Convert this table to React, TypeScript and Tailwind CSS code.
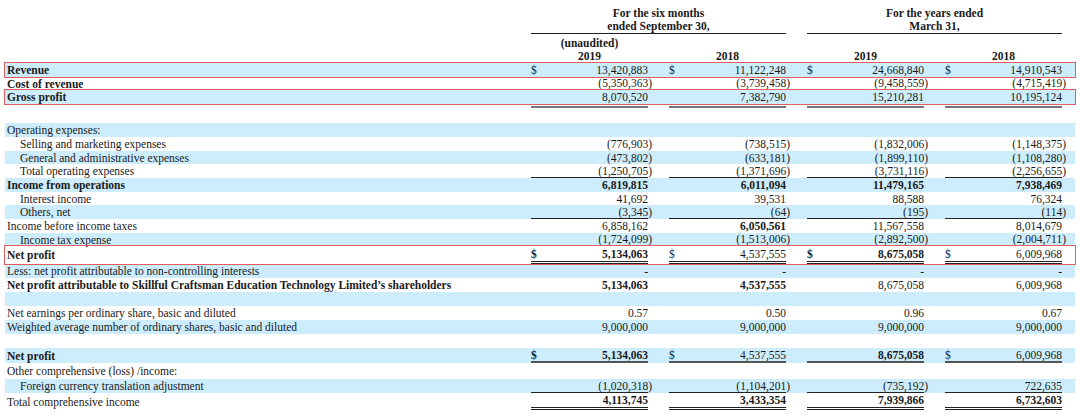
import clsx from "clsx";

type Cell = { v: string; d?: boolean; b?: boolean; bd?: boolean };
type Row = {
	label?: string;
	h: string;
	lb?: boolean;
	ind?: boolean;
	bg?: boolean;
	box?: boolean;
	line?: string;
	cells?: (Cell | string)[];
};

const single = "border-b border-[#222]";
const thick = "border-b-2 border-[#555]";
const dbl = "border-b-[3px] border-double border-[#222]";

const rows: Row[] = [
	{
		label: "Revenue",
		lb: true,
		h: "h-[14px]",
		bg: true,
		box: true,
		cells: [
			{ v: "13,420,883", d: true },
			{ v: "11,122,248", d: true },
			{ v: "24,668,840", d: true },
			{ v: "14,910,543", d: true },
		],
	},
	{
		label: "Cost of revenue",
		lb: true,
		h: "h-[13px]",
		line: single,
		cells: ["(5,350,363)", "(3,739,458)", "(9,458,559)", "(4,715,419)"],
	},
	{
		label: "Gross profit",
		lb: true,
		h: "h-[14px]",
		bg: true,
		box: true,
		cells: ["8,070,520", "7,382,790", "15,210,281", "10,195,124"],
	},
	{ h: "h-[19px] items-start", line: "border-t-2 border-[#777]", cells: ["", "", "", ""] },
	{ label: "Operating expenses:", h: "h-[14px]", bg: true },
	{
		label: "Selling and marketing expenses",
		ind: true,
		h: "h-[14px]",
		cells: ["(776,903)", "(738,515)", "(1,832,006)", "(1,148,375)"],
	},
	{
		label: "General and administrative expenses",
		ind: true,
		h: "h-[13px]",
		bg: true,
		cells: ["(473,802)", "(633,181)", "(1,899,110)", "(1,108,280)"],
	},
	{
		label: "Total operating expenses",
		ind: true,
		h: "h-[14px]",
		line: single,
		cells: ["(1,250,705)", "(1,371,696)", "(3,731,116)", "(2,256,655)"],
	},
	{
		label: "Income from operations",
		lb: true,
		h: "h-[14px]",
		bg: true,
		cells: [
			{ v: "6,819,815", b: true },
			{ v: "6,011,094", b: true },
			{ v: "11,479,165", b: true },
			{ v: "7,938,469", b: true },
		],
	},
	{
		label: "Interest income",
		ind: true,
		h: "h-[13px]",
		cells: ["41,692", "39,531", "88,588", "76,324"],
	},
	{
		label: "Others, net",
		ind: true,
		h: "h-[14px]",
		bg: true,
		line: single,
		cells: ["(3,345)", "(64)", "(195)", "(114)"],
	},
	{
		label: "Income before income taxes",
		h: "h-[14px]",
		cells: ["6,858,162", { v: "6,050,561", b: true }, "11,567,558", "8,014,679"],
	},
	{
		label: "Income tax expense",
		ind: true,
		h: "h-[13px]",
		bg: true,
		line: single,
		cells: ["(1,724,099)", "(1,513,006)", "(2,892,500)", "(2,004,711)"],
	},
	{
		label: "Net profit",
		lb: true,
		h: "h-[18px]",
		box: true,
		line: dbl,
		cells: [
			{ v: "5,134,063", b: true, d: true, bd: true },
			{ v: "4,537,555", d: true },
			{ v: "8,675,058", b: true, d: true, bd: true },
			{ v: "6,009,968", d: true },
		],
	},
	{
		label: "Less: net profit attributable to non-controlling interests",
		h: "h-[14px]",
		bg: true,
		cells: ["-", "-", "-", "-"],
	},
	{
		label:
			"Net profit attributable to Skillful Craftsman Education Technology Limited’s shareholders",
		lb: true,
		h: "h-[14px]",
		cells: [
			{ v: "5,134,063", b: true },
			{ v: "4,537,555", b: true },
			"8,675,058",
			"6,009,968",
		],
	},
	{ h: "h-[14px]", bg: true },
	{
		label: "Net earnings per ordinary share, basic and diluted",
		h: "h-[14px]",
		cells: ["0.57", "0.50", "0.96", "0.67"],
	},
	{
		label: "Weighted average number of ordinary shares, basic and diluted",
		h: "h-[14px]",
		bg: true,
		cells: ["9,000,000", "9,000,000", "9,000,000", "9,000,000"],
	},
	{ h: "h-[14px]" },
	{
		label: "Net profit",
		lb: true,
		h: "h-[15px]",
		bg: true,
		line: thick,
		cells: [
			{ v: "5,134,063", b: true, d: true, bd: true },
			{ v: "4,537,555", d: true },
			{ v: "8,675,058", b: true },
			{ v: "6,009,968", d: true },
		],
	},
	{ label: "Other comprehensive (loss) /income:", h: "h-[16px]" },
	{
		label: "Foreign currency translation adjustment",
		ind: true,
		h: "h-[14px]",
		bg: true,
		line: single,
		cells: ["(1,020,318)", "(1,104,201)", "(735,192)", "722,635"],
	},
	{
		label: "Total comprehensive income",
		h: "h-[17px]",
		line: dbl,
		cells: [
			{ v: "4,113,745", b: true },
			{ v: "3,433,354", b: true },
			{ v: "7,939,866", b: true },
			{ v: "6,732,603", b: true },
		],
	},
];

function Amount({ v }: { v: string }) {
	if (v.endsWith(")")) {
		return (
			<span>
				{v.slice(0, -1)}
				<span className="-mr-[4px]">)</span>
			</span>
		);
	}
	return <span>{v}</span>;
}

function StatementRow({ row }: { row: Row }) {
	const cells = row.cells ?? [];
	return (
		<div
			className={clsx(
				"flex w-[1070px] items-center pt-[2px]",
				row.h,
				row.bg && "bg-[#cdedfd]",
				row.box && "outline outline-1 outline-[#e35d5d]",
			)}
		>
			<div
				className={clsx(
					"w-[526px] shrink-0 whitespace-nowrap",
					row.ind ? "pl-[15px]" : "pl-[2px]",
					row.lb && "font-bold",
				)}
			>
				{row.label}
			</div>
			{cells.map((raw, i) => {
				const c = typeof raw === "string" ? { v: raw } : raw;
				return (
					<div
						key={i}
						className={clsx(
							"flex h-full w-[117px] shrink-0 items-center justify-between",
							i > 0 && "ml-[21px]",
							row.line,
						)}
					>
						<span className={clsx(c.bd && "font-bold")}>{c.d ? "$" : ""}</span>
						<span className={clsx(c.b && "font-bold")}>
							<Amount v={c.v} />
						</span>
					</div>
				);
			})}
		</div>
	);
}

export default function App() {
	return (
		<div className="h-[417px] w-[1080px] overflow-hidden bg-white pl-[5px] font-['Liberation_Serif',serif] text-[11.5px] leading-none text-[#1a1a1a]">
			<div className="flex h-[34px] font-bold">
				<div className="w-[526px] shrink-0" />
				<div className="flex w-[255px] shrink-0 flex-col items-center border-b border-[#222] pt-[7px] leading-[13px]">
					<span>For the six months</span>
					<span>ended September 30,</span>
				</div>
				<div className="ml-[21px] flex w-[255px] shrink-0 flex-col items-center border-b border-[#222] pt-[7px] leading-[13px]">
					<span>For the years ended</span>
					<span>March 31,</span>
				</div>
			</div>
			<div className="mt-[2px] flex h-[14px] items-center pt-[2px] font-bold">
				<div className="w-[526px] shrink-0" />
				<div className="w-[117px] shrink-0 text-center">(unaudited)</div>
			</div>
			<div className="flex h-[13px] font-bold">
				<div className="w-[526px] shrink-0" />
				{["2019", "2018", "2019", "2018"].map((y, i) => (
					<div
						key={i}
						className={clsx(
							"flex w-[117px] shrink-0 items-center justify-center border-b border-[#222] pt-[2px]",
							i > 0 && "ml-[21px]",
						)}
					>
						{y}
					</div>
				))}
			</div>
			{rows.map((row, i) => (
				<StatementRow key={i} row={row} />
			))}
		</div>
	);
}
